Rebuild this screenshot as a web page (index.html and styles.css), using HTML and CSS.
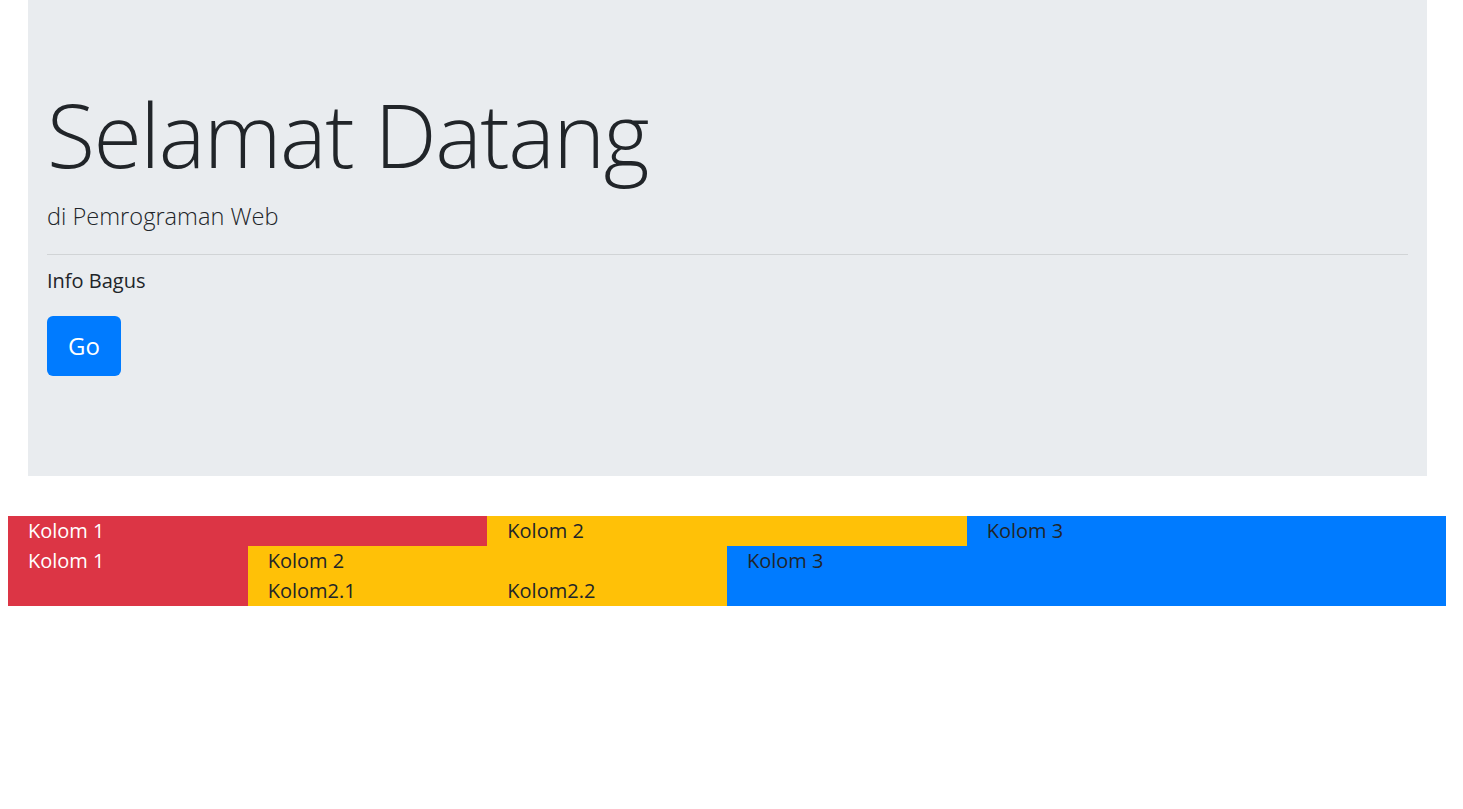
FILE: index.html
```html
<!DOCTYPE html>
<html lang="id">
<head>
  <meta charset="UTF-8">
  <meta name="viewport" content="width=device-width, initial-scale=1.0">
  <title>Selamat Datang</title>
  <link rel="stylesheet" href="styles.css">
</head>
<body>
  <div class="page">
    <div class="jumbotron">
      <h1 class="display">Selamat Datang</h1>
      <p class="lead">di Pemrograman Web</p>
      <hr>
      <p>Info Bagus</p>
      <p><a class="btn" href="#">Go</a></p>
    </div>

    <div class="row thirds">
      <div class="col red">Kolom 1</div>
      <div class="col yellow">Kolom 2</div>
      <div class="col blue">Kolom 3</div>
    </div>

    <div class="row sixths">
      <div class="col red">Kolom 1</div>
      <div class="col yellow nested">
        <div class="nested-title">Kolom 2</div>
        <div class="inner-row">
          <div>Kolom2.1</div>
          <div>Kolom2.2</div>
        </div>
      </div>
      <div class="col blue">Kolom 3</div>
    </div>
  </div>
</body>
</html>
```

FILE: styles.css
```css
body {
  margin: 0;
  font-family: 'Open Sans', 'Noto Sans', sans-serif;
  font-size: 20px;
  line-height: 1.5;
  color: #212529;
  background-color: #fff;
}
.page {
  width: 1438px;
  margin-left: 8px;
}
.jumbotron {
  background-color: #e9ecef;
  margin: 0 19px 40px 20px;
  padding: 80px 19px;
}
.jumbotron p {
  margin: 0 0 20px;
  line-height: 30px;
}
.display {
  font-size: 88px;
  font-weight: 300;
  line-height: 108px;
  margin: 0 0 10px;
  letter-spacing: -1.5px;
}
.jumbotron .lead {
  font-size: 23.6px;
  font-weight: 300;
  line-height: 37.5px;
  margin-bottom: 0;
}
hr {
  border: 0;
  border-top: 1px solid rgba(0, 0, 0, 0.1);
  margin: 18px 0 11px;
}
.btn {
  display: inline-block;
  background-color: #007bff;
  color: #fff;
  text-decoration: none;
  font-size: 24px;
  line-height: 40px;
  padding: 10px 21px;
  border-radius: 6px;
  vertical-align: top;
}
.jumbotron .btn-wrap {
  line-height: 60px;
}
.row {
  display: grid;
}
.thirds {
  grid-template-columns: 1fr 1fr 1fr;
}
.sixths {
  grid-template-columns: 1fr 2fr 3fr;
}
.col {
  padding: 0 20px;
  line-height: 30px;
}
.inner-row {
  display: grid;
  grid-template-columns: 1fr 1fr;
  column-gap: 40px;
}
.red {
  background-color: #dc3545;
  color: #fff;
}
.yellow {
  background-color: #ffc107;
}
.blue {
  background-color: #007bff;
}
```
